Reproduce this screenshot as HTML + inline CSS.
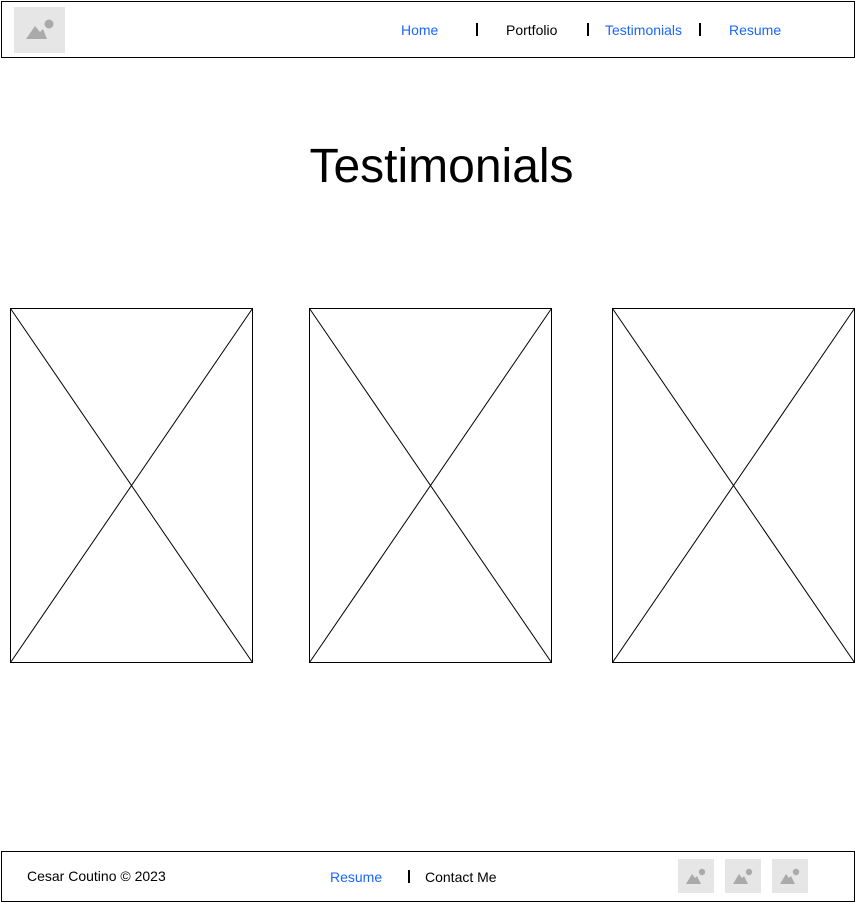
<!DOCTYPE html>
<html><head><meta charset="utf-8"><style>
body{margin:0;width:855px;height:902px;position:relative;background:#fff;font-family:"Liberation Sans",sans-serif;overflow:hidden}
.a{position:absolute}
.box{position:absolute;border:1px solid #000;box-sizing:border-box}
.t{position:absolute;font-size:14px;line-height:16px;white-space:nowrap}
.b{color:#1a66ff}
.bar{position:absolute;width:2px;height:13px;background:#000}
</style></head><body>
<div class="box" style="left:1px;top:1px;width:854px;height:57px"></div>
<svg class="a" style="left:14px;top:7px" width="51" height="46" viewBox="0 0 51 46"><rect width="51" height="46" fill="#e6e6e6"/><path d="M12 32 L21 19 L26 25 L29 22 L33 32 Z" fill="#aaa"/><circle cx="35" cy="17" r="4.5" fill="#aaa"/></svg>
<div class="t b" style="left:401px;top:22px">Home</div>
<div class="bar" style="left:476px;top:23px"></div>
<div class="t" style="left:506px;top:22px">Portfolio</div>
<div class="bar" style="left:587px;top:23px"></div>
<div class="t b" style="left:605px;top:22px">Testimonials</div>
<div class="bar" style="left:699px;top:23px"></div>
<div class="t b" style="left:729px;top:22px">Resume</div>
<div class="a" style="left:0;width:883px;top:139px;text-align:center;font-size:48px;line-height:56px">Testimonials</div>
<svg class="a" style="left:0;top:0" width="855" height="902">
<g fill="none" stroke="#000" stroke-width="1">
<rect x="10.5" y="308.5" width="242" height="354"/><path d="M10.5 308.5 L252.5 662.5 M252.5 308.5 L10.5 662.5"/>
<rect x="309.5" y="308.5" width="242" height="354"/><path d="M309.5 308.5 L551.5 662.5 M551.5 308.5 L309.5 662.5"/>
<rect x="612.5" y="308.5" width="242" height="354"/><path d="M612.5 308.5 L854.5 662.5 M854.5 308.5 L612.5 662.5"/>
</g></svg>
<div class="box" style="left:1px;top:851px;width:854px;height:51px"></div>
<div class="t" style="left:27px;top:868px">Cesar Coutino © 2023</div>
<div class="t b" style="left:330px;top:869px">Resume</div>
<div class="bar" style="left:408px;top:870px"></div>
<div class="t" style="left:425px;top:869px">Contact Me</div>
<svg class="a" style="left:678px;top:859px" width="36" height="34" viewBox="0 0 36 34"><rect width="36" height="34" fill="#e6e6e6"/><path d="M8 25 L14 15 L17 19 L19 17 L23 25 Z" fill="#aaa"/><circle cx="24" cy="13" r="3.2" fill="#aaa"/></svg>
<svg class="a" style="left:725px;top:859px" width="36" height="34" viewBox="0 0 36 34"><rect width="36" height="34" fill="#e6e6e6"/><path d="M8 25 L14 15 L17 19 L19 17 L23 25 Z" fill="#aaa"/><circle cx="24" cy="13" r="3.2" fill="#aaa"/></svg>
<svg class="a" style="left:772px;top:859px" width="36" height="34" viewBox="0 0 36 34"><rect width="36" height="34" fill="#e6e6e6"/><path d="M8 25 L14 15 L17 19 L19 17 L23 25 Z" fill="#aaa"/><circle cx="24" cy="13" r="3.2" fill="#aaa"/></svg>
</body></html>
